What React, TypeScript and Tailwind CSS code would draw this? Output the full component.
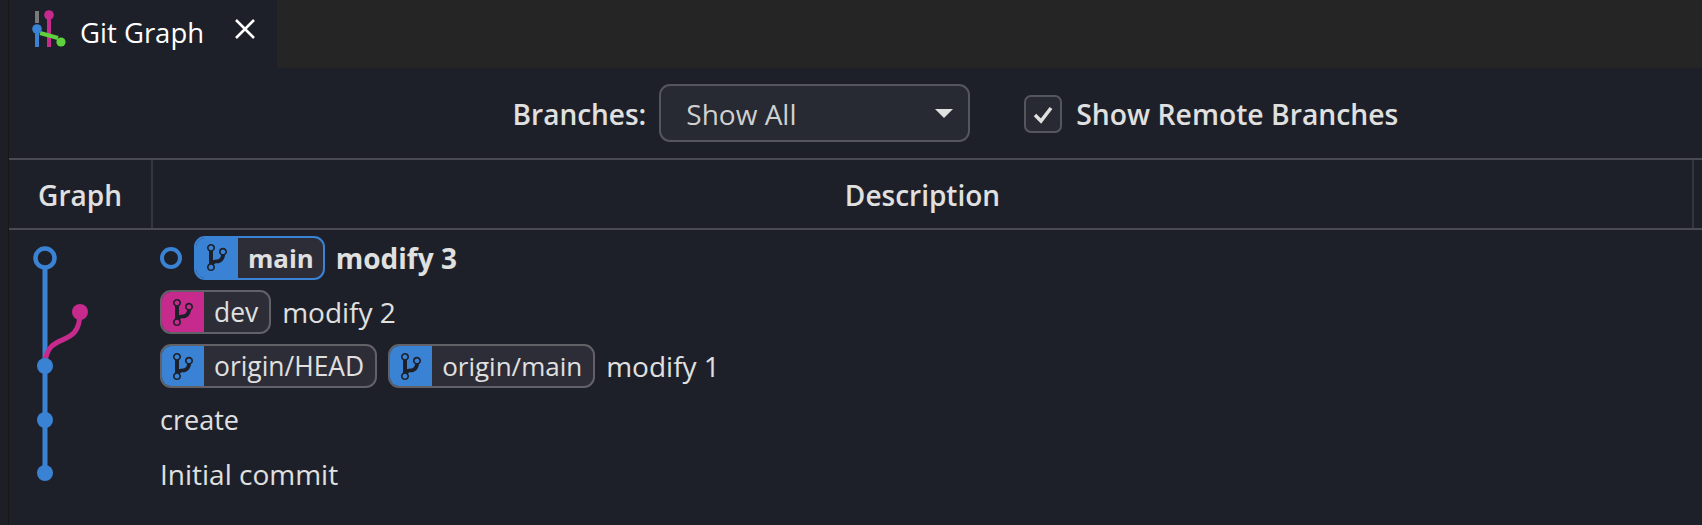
import React from 'react';

const BLUE = '#3a82d4';

function BranchIcon() {
  return (
    <svg viewBox="0 1 10 14" preserveAspectRatio="none" className="h-[27px] w-[20px] fill-[#1e2029]">
      <path d="M10 5c0-1.11-.89-2-2-2a1.993 1.993 0 0 0-1 3.72v.3c-.02.52-.23.98-.63 1.38-.4.4-.86.61-1.38.63-.83.02-1.48.16-2 .45V4.72a1.993 1.993 0 0 0-1-3.72C.88 1 0 1.89 0 3a2 2 0 0 0 1 1.72v6.56c-.59.35-1 .99-1 1.72 0 1.11.89 2 2 2 1.11 0 2-.89 2-2 0-.53-.2-1-.53-1.36.09-.06.48-.41.59-.47.25-.11.56-.17.94-.17 1.05-.05 1.95-.45 2.75-1.25S8.95 7.77 9 6.73h-.02C9.59 6.37 10 5.73 10 5zM2 1.8c.66 0 1.2.55 1.2 1.2 0 .65-.55 1.2-1.2 1.2C1.35 4.2.8 3.65.8 3c0-.65.55-1.2 1.2-1.2zm0 12.41c-.66 0-1.2-.55-1.2-1.2 0-.65.55-1.2 1.2-1.2.65 0 1.2.55 1.2 1.2 0 .65-.55 1.2-1.2 1.2zm6-8c-.66 0-1.2-.55-1.2-1.2 0-.65.55-1.2 1.2-1.2.65 0 1.2.55 1.2 1.2 0 .65-.55 1.2-1.2 1.2z" />
    </svg>
  );
}

function Ref({ name, color, size, active }: { name: string; color: string; size: string; active?: boolean }) {
  return (
    <span
      className={`flex h-[44px] items-stretch overflow-hidden rounded-[11px] border-2 bg-[#2d2d38] ${size} ${
        active ? 'border-[#3a82d4] font-bold' : 'border-[#616167]'
      }`}
    >
      <span className={`flex w-[42px] items-center justify-center ${color}`}>
        <BranchIcon />
      </span>
      <span className={`pl-[10px] leading-[40px] ${active ? 'pr-[9px]' : 'pr-[11px]'}`}>{name}</span>
    </span>
  );
}

function Graph() {
  return (
    <svg viewBox="0 0 144 296" className="h-[296px] w-[144px]">
      <path d="M36 28 V243" stroke={BLUE} strokeWidth="5" fill="none" />
      <path d="M36 133 C39 99 71 121 71 82" stroke="#c52a8c" strokeWidth="5" fill="none" />
      <circle cx="36" cy="28" r="9.5" fill="#1e2029" stroke={BLUE} strokeWidth="4.5" />
      <circle cx="71" cy="82" r="8" fill="#c52a8c" />
      <circle cx="36" cy="136" r="8" fill={BLUE} />
      <circle cx="36" cy="190" r="8" fill={BLUE} />
      <circle cx="36" cy="243" r="8" fill={BLUE} />
    </svg>
  );
}

function TabIcon() {
  return (
    <svg viewBox="0 0 36 40" className="h-[40px] w-[36px]">
      <rect x="5" y="2" width="4" height="12" fill="#7a7a7a" />
      <rect x="5" y="24" width="4" height="14" fill={BLUE} />
      <rect x="17" y="6" width="4" height="32" fill="#c52a8c" />
      <path d="M10 24 L28 29" stroke="#5fd13d" strokeWidth="4" />
      <circle cx="7" cy="20" r="4.8" fill={BLUE} />
      <circle cx="19" cy="6" r="4.8" fill="#c52a8c" />
      <circle cx="31" cy="33" r="4.6" fill="#5fd13d" />
    </svg>
  );
}

export default function App() {
  return (
    <div className="flex h-[525px] w-[1702px] overflow-hidden bg-[#1e2029] font-['Open_Sans','Noto_Sans',sans-serif] text-[28px] text-[#e0e0e0]">
      <div className="w-[9px] shrink-0 border-r border-[#17171a] bg-[#1d1e26]" />
      <div className="flex min-w-0 flex-1 flex-col">
        <div className="flex h-[68px] shrink-0 bg-[#252525]">
          <div className="flex w-[268px] items-start bg-[#1e2029] pl-[21px] pt-[9px]">
            <TabIcon />
            <span className="ml-[14px] mt-[3px] text-[27.5px] text-white">Git Graph</span>
            <svg viewBox="0 0 20 20" className="ml-[31px] mt-[10px] h-[20px] w-[20px] fill-none stroke-white stroke-[2.5]">
              <path d="M1 1 L19 19 M19 1 L1 19" />
            </svg>
          </div>
        </div>
        <div className="flex h-[90px] shrink-0 items-center justify-center pl-[200px] font-semibold">
          <span className="mt-[2px]">Branches:</span>
          <div className="ml-[13px] flex h-[58px] w-[311px] items-center justify-between rounded-[11px] border-2 border-[#55565d] bg-[#272933] pl-[25px] pr-[15px] text-[28px] font-normal text-[#d0d0d0]">
            <span className="mt-[2px]">Show All</span>
            <span className="h-0 w-0 border-x-[9px] border-t-[9px] border-x-transparent border-t-[#e0e0e0]" />
          </div>
          <div className="ml-[54px] mt-[2px] flex h-[38px] w-[38px] items-center justify-center rounded-[7px] border-2 border-[#55565d] bg-[#272933]">
            <svg viewBox="0 0 20 20" className="h-[20px] w-[20px] fill-none stroke-[#e0e0e0] stroke-[3.5]">
              <path d="M2 11 L8 17 L18 4" />
            </svg>
          </div>
          <span className="ml-[14px] mt-[2px] text-[28.3px]">Show Remote Branches</span>
        </div>
        <div className="flex h-[72px] shrink-0 border-y-2 border-[#4a4b52] font-semibold">
          <div className="flex w-[144px] items-center justify-center border-r-2 border-[#34353d] pt-[2px]">Graph</div>
          <div className="flex w-[1541px] items-center justify-center border-r-2 border-[#34353d] pt-[2px]">Description</div>
        </div>
        <div className="flex">
          <Graph />
          <div className="-ml-[1px] flex flex-col pl-[8px]">
            <div className="flex h-[55px] items-center">
              <span className="h-[22px] w-[22px] rounded-full border-[4px] border-[#3a82d4]" />
              <span className="ml-[12px]"><Ref name="main" color="bg-[#3a82d4]" size="text-[25.8px]" active /></span>
              <span className="ml-[11px] font-bold">modify 3</span>
            </div>
            <div className="flex h-[54px] items-center">
              <Ref name="dev" color="bg-[#c52a8c]" size="text-[26.4px]" />
              <span className="ml-[11px]">modify 2</span>
            </div>
            <div className="flex h-[54px] items-center gap-[11px]">
              <Ref name="origin/HEAD" color="bg-[#3a82d4]" size="text-[26.4px]" />
              <Ref name="origin/main" color="bg-[#3a82d4]" size="text-[26px]" />
              <span>modify 1</span>
            </div>
            <div className="flex h-[54px] items-center text-[27px]">create</div>
            <div className="flex h-[54px] items-center">Initial commit</div>
          </div>
        </div>
      </div>
    </div>
  );
}
